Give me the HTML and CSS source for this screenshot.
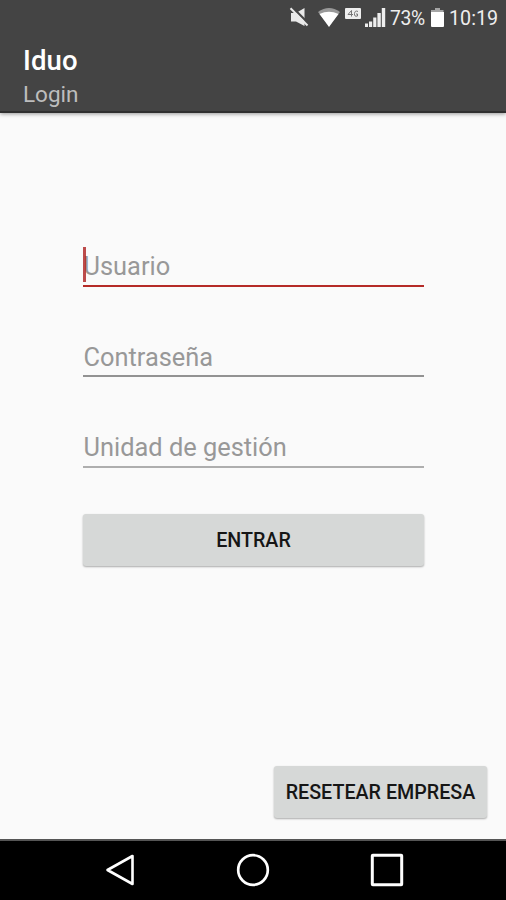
FILE: index.html
```html
<!DOCTYPE html>
<html lang="es">
<head>
<meta charset="utf-8">
<title>Iduo</title>
<link rel="stylesheet" href="styles.css">
</head>
<body>
<div class="screen">
  <header class="app-bar">
    <div class="status">
      <svg class="signals" width="100" height="24" viewBox="0 0 100 24">
        <path d="M3 13h5l8.500-5v18L8 21.500H3z" fill="#e9e9e9"/>
        <path d="M4.500 7.500L21 24" stroke="#444" stroke-width="2.400"/>
        <path d="M2.500 8.300L19.500 25.500" stroke="#e9e9e9" stroke-width="2"/>
        <path d="M30 12Q41 4 52 12L41 26z" fill="#999"/>
        <path d="M31.500 14Q41 9.500 50.500 14L41 27z" fill="#fff"/>
        <rect x="57" y="8" width="16" height="11" rx="1" fill="#eee"/>
        <path d="M63.500 16.500v-6l-3.500 4h5M70 11.500q-3-1.500-3.500 2t3 2.500v-2h-1.500" fill="none" stroke="#777" stroke-width="1"/>
        <path d="M77 23.500h3V27h-3zM81 21.500h3.200V27H81zM85.200 17.500h3.200V27h-3.200zM89.400 13h3.400v14h-3.400zM93.800 8h3.400v19h-3.400z" fill="#eee"/>
      </svg>
      <span class="percent">73%</span>
      <svg class="battery" width="13" height="20" viewBox="0 0 13 20">
        <path d="M4 0h5v2h3.500v3H0V2h4z" fill="#a5a5a5"/>
        <path d="M0 4h13v14q0 1-1 1H1q-1 0-1-1z" fill="#fff"/>
      </svg>
      <span class="time">10:19</span>
    </div>
    <h1 class="title">Iduo</h1>
    <p class="subtitle">Login</p>
  </header>
  <main class="content">
    <form class="form">
      <div class="field focused"><span class="caret"></span>Usuario</div>
      <div class="field password">Contraseña</div>
      <div class="field light">Unidad de gestión</div>
      <button class="button enter" type="button">ENTRAR</button>
    </form>
    <button class="button reset" type="button">RESETEAR EMPRESA</button>
  </main>
  <nav class="nav">
    <svg width="34" height="36" viewBox="0 0 34 36"><path d="M4.500 18L29.500 4v28z" fill="none" stroke="#fff" stroke-width="2.600" stroke-linejoin="round"/></svg>
    <svg width="36" height="36" viewBox="0 0 36 36"><circle cx="18" cy="18" r="14.800" fill="none" stroke="#fff" stroke-width="2.700"/></svg>
    <svg width="36" height="36" viewBox="0 0 36 36"><rect x="3.300" y="3.300" width="29.400" height="29.400" rx=".5" fill="none" stroke="#fff" stroke-width="3"/></svg>
  </nav>
</div>
</body>
</html>
```
FILE: styles.css
```css
* { box-sizing: border-box; }
body { margin: 0; background: #fafafa; font-family: Roboto, sans-serif; }
.screen { width: 506px; height: 900px; display: flex; flex-direction: column; overflow: hidden; }
.app-bar {
  height: 113px;
  flex: none;
  background: #444;
  border-bottom: 2px solid #303030;
  box-shadow: 0 1px 4px rgba(0, 0, 0, .4);
}
.status { height: 36px; display: flex; align-items: center; padding-left: 288px; color: #eee; }
.signals { margin-right: 2px; overflow: visible; transform: translateY(-6px); flex: none; }
.percent { width: 41px; padding-top: 1px; font-size: 19.300px; line-height: 36px; letter-spacing: -.3px; flex: none; }
.battery { margin-right: 5px; flex: none; }
.time { padding-top: 2px; font-size: 19.700px; line-height: 36px; }
.title { margin: 8px 0 0 23px; color: #fff; font-size: 27.500px; font-weight: 500; line-height: 34px; letter-spacing: .1px; }
.subtitle { margin: 0 0 0 23px; color: #bdbdbd; font-size: 22.500px; line-height: 32px; }
.content { flex: 1; display: flex; flex-direction: column; padding: 133px 18px 21px 83px; }
.form { width: 341px; }
.field {
  position: relative;
  height: 41px;
  margin-bottom: 49px;
  padding-left: .5px;
  border-bottom: 2px solid #929292;
  color: #989898;
  font-size: 25.400px;
  line-height: 41px;
}
.field.focused { border-bottom-color: #b52b27; }
.field.password { line-height: 43px; }
.field.light { border-bottom-color: #aeaeae; margin-top: 50px; margin-bottom: 46px; }
.caret { position: absolute; left: 0; top: 1px; width: 3px; height: 35px; background: rgba(170, 25, 25, .78); }
.button {
  height: 52px;
  padding: 2px 0 0;
  border: 0;
  border-radius: 3px;
  background: #d6d8d7;
  box-shadow: 0 1px 2px rgba(0, 0, 0, .32);
  color: #161616;
  font: 500 19.700px/50px Roboto, sans-serif;
}
.enter { display: block; width: 341px; }
.reset { width: 213px; margin: auto 1px 0 0; align-self: flex-end; }
.nav {
  height: 61px;
  flex: none;
  display: flex;
  align-items: center;
  gap: 98px;
  padding: 0 0 2px 103px;
  background: #000;
  border-top: 2px solid #555;
}
```
